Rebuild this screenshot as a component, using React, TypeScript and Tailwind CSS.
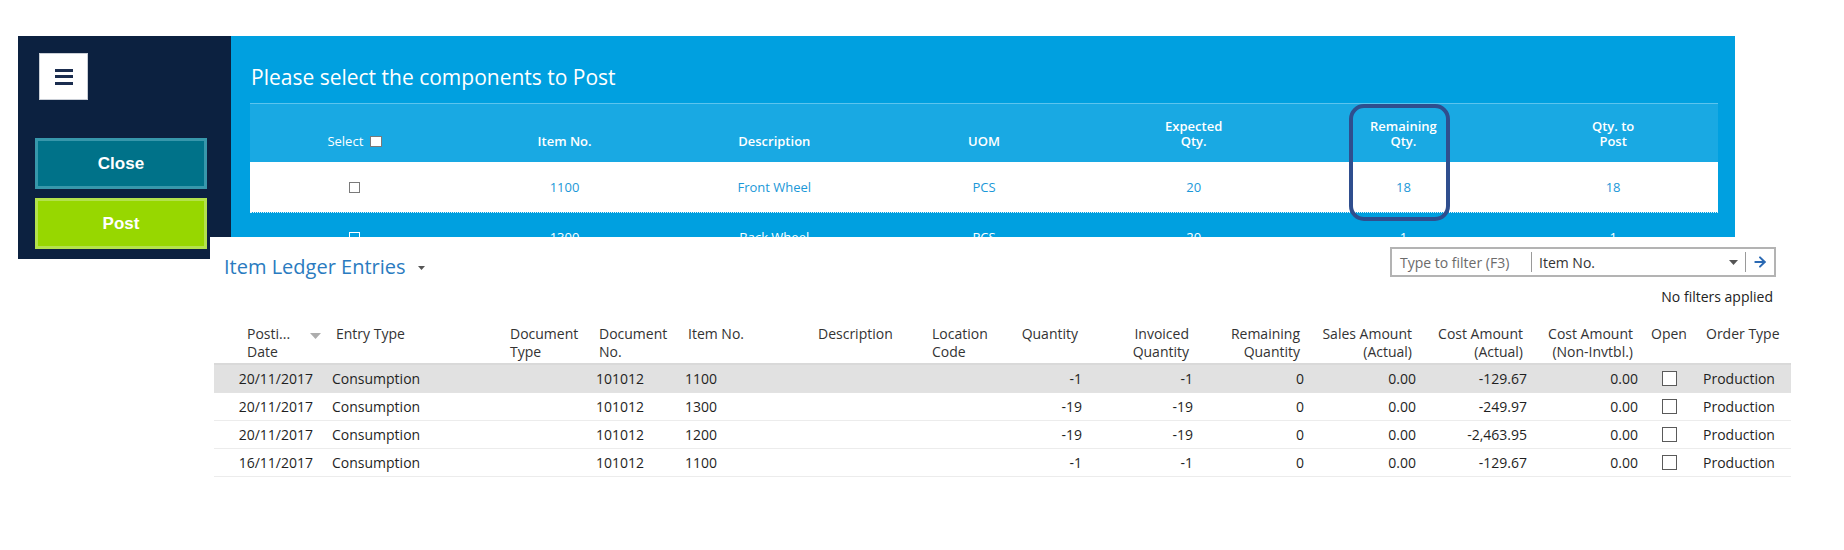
import { ArrowRight } from "lucide-react";

const topHeaders = [
  ["Item No."],
  ["Description"],
  ["UOM"],
  ["Expected", "Qty."],
  ["Remaining", "Qty."],
  ["Qty. to", "Post"],
];

const topRows = [
  ["1100", "Front Wheel", "PCS", "20", "18", "18"],
  ["1300", "Back Wheel", "PCS", "20", "1", "1"],
];

// lower table columns: header class, data class, header lines
const cols = [
  { h: "pl-[14px]", d: "pl-[10px]", label: ["Entry Type"] },
  { h: "pl-[5px]", d: "pl-[5px]", label: ["Document", "Type"] },
  { h: "pl-[9px]", d: "pl-[6px]", label: ["Document", "No."] },
  { h: "pl-[10px]", d: "pl-[7px]", label: ["Item No."] },
  { h: "pl-[8px]", d: "pl-[8px]", label: ["Description"] },
  { h: "pl-[7px]", d: "pl-[7px]", label: ["Location", "Code"] },
  { h: "pr-[12px] text-right", d: "pr-[8px] text-right", label: ["Quantity"] },
  { h: "pr-[11px] text-right", d: "pr-[7px] text-right", label: ["Invoiced", "Quantity"] },
  { h: "pr-[11px] text-right", d: "pr-[7px] text-right", label: ["Remaining", "Quantity"] },
  { h: "pr-[11px] text-right", d: "pr-[7px] text-right", label: ["Sales Amount", "(Actual)"] },
  { h: "pr-[11px] text-right", d: "pr-[7px] text-right", label: ["Cost Amount", "(Actual)"] },
  { h: "pr-[12px] text-right", d: "pr-[7px] text-right", label: ["Cost Amount", "(Non-Invtbl.)"] },
];

const entries = [
  ["20/11/2017", "Consumption", "", "101012", "1100", "", "", "-1", "-1", "0", "0.00", "-129.67", "0.00"],
  ["20/11/2017", "Consumption", "", "101012", "1300", "", "", "-19", "-19", "0", "0.00", "-249.97", "0.00"],
  ["20/11/2017", "Consumption", "", "101012", "1200", "", "", "-19", "-19", "0", "0.00", "-2,463.95", "0.00"],
  ["16/11/2017", "Consumption", "", "101012", "1100", "", "", "-1", "-1", "0", "0.00", "-129.67", "0.00"],
];

const gridCols =
  "grid grid-cols-[108px_183px_85px_88px_132px_115px_85px_80px_110px_111px_112px_111px_111px_51px_95px]";

function Sidebar() {
  return (
    <aside className="flex h-[223px] w-[213px] shrink-0 flex-col bg-[#0c2140]">
      <div className="ml-[21px] mt-[17px] flex h-[47px] w-[49px] flex-col items-center justify-center gap-[3.5px] border border-[#c9ced6] bg-white">
        <span className="h-[3px] w-[18px] bg-[#1b2d4f]" />
        <span className="h-[3px] w-[18px] bg-[#1b2d4f]" />
        <span className="h-[3px] w-[18px] bg-[#1b2d4f]" />
      </div>
      <div className="ml-[17px] mt-[38px] flex w-[172px] flex-col gap-[9px] font-['Liberation_Sans',Arial,sans-serif] text-[17px] font-bold text-white">
        <button className="h-[51px] border-[3px] border-[#3797ab] bg-[#007289]">Close</button>
        <button className="h-[51px] border-[3px] border-[#b3e24c] bg-[#97d700]">Post</button>
      </div>
    </aside>
  );
}

function SmallBox({ white }: { white?: boolean }) {
  return (
    <span
      className={
        white
          ? "inline-block h-[11px] w-[11px] border border-white"
          : "inline-block h-[11px] w-[11px] border-[1.5px] border-[#7a7a7a] bg-white"
      }
    />
  );
}

function PostDialog() {
  return (
    <section className="relative h-[223px] w-[1504px] shrink-0 overflow-hidden bg-[#00a0e0]">
      <h1 className="ml-[20px] mt-[27px] text-[21px] font-normal leading-[28px] text-white">
        Please select the components to Post
      </h1>
      <div className="ml-[19px] mt-[12px] w-[1468px]">
        <div className="grid h-[59px] grid-cols-7 items-end border-t border-[#5cc4ee] bg-[#19a9e3] pb-[13px] text-[13px] font-semibold leading-[15px] text-white">
          <div className="flex items-center justify-center gap-[7px] font-normal">
            <span>Select</span>
            <span className="inline-block h-[11px] w-[12px] border-[1.5px] border-[#7a7a7a] bg-white" />
          </div>
          {topHeaders.map((lines) => (
            <div key={lines.join()} className="text-center">
              {lines.map((l) => (
                <div key={l}>{l}</div>
              ))}
            </div>
          ))}
        </div>
        {topRows.map((row, i) => (
          <div
            key={row[0]}
            className={
              i === 0
                ? "grid h-[50px] grid-cols-7 items-center bg-white pt-[1px] text-[13px] text-[#1b98d8]"
                : "grid h-[50px] grid-cols-7 items-center border-t border-dotted border-[#e3f3fb] text-[13px] text-white"
            }
          >
            <div className="flex justify-center">
              <SmallBox white={i !== 0} />
            </div>
            {row.map((c, j) => (
              <div key={j} className="text-center">
                {c}
              </div>
            ))}
          </div>
        ))}
      </div>
      {/* highlight drawn over the Remaining Qty. column */}
      <div className="absolute left-[1118px] top-[68px] h-[117px] w-[101px] rounded-[15px] border-[4px] border-[#2f4e8e]" />
    </section>
  );
}

function LedgerEntries() {
  return (
    <section className="relative z-10 -mt-[22px] ml-[210px] w-[1600px] bg-white pb-[60px]">
      <div className="flex h-[44px] w-[1566px] items-start justify-between">
        <div className="ml-[14px] mt-[16px] flex items-center gap-[12px]">
          <span className="text-[20px] font-normal leading-[28px] text-[#2a7bc0]">Item Ledger Entries</span>
          <svg width="7" height="4" viewBox="0 0 7 4" className="mt-[2px]">
            <polygon points="0,0 7,0 3.5,4" fill="#555" />
          </svg>
        </div>
        <div className="mt-[10px] flex h-[30px] w-[386px] items-center border-2 border-[#b3b3b3] text-[14px]">
          <span className="w-[139px] pl-[8px] text-[#6b6b6b]">Type to filter (F3)</span>
          <span className="h-[20px] w-px bg-[#9a9a9a]" />
          <span className="flex-1 pl-[7px] text-[#333]">Item No.</span>
          <svg width="9" height="5" viewBox="0 0 9 5" className="mr-[7px]">
            <polygon points="0,0 9,0 4.5,5" fill="#555" />
          </svg>
          <span className="h-[20px] w-px bg-[#9a9a9a]" />
          <ArrowRight size={16} strokeWidth={3} className="ml-[6px] mr-[6px] text-[#2a69b3]" />
        </div>
      </div>
      <div className="mt-[6px] w-[1563px] text-right text-[14px] leading-[20px] text-[#222]">No filters applied</div>

      <div className="ml-[4px] mt-[16px] w-[1577px] text-[14px]">
        <div className={`${gridCols} border-b-2 border-[#d9d9d9] pb-[2px] pt-[2px] leading-[18px] text-[#333]`}>
          <div className="flex items-start pl-[33px]">
            <div>
              <div>Posti...</div>
              <div>Date</div>
            </div>
            <svg width="11" height="6" viewBox="0 0 11 6" className="ml-[20px] mt-[8px]">
              <polygon points="0,0 11,0 5.5,6" fill="#adadad" />
            </svg>
          </div>
          {cols.map((c) => (
            <div key={c.label.join()} className={c.h}>
              {c.label.map((l) => (
                <div key={l}>{l}</div>
              ))}
            </div>
          ))}
          <div className="pl-[6px]">Open</div>
          <div className="pl-[10px]">Order Type</div>
        </div>
        {entries.map((row, i) => (
          <div
            key={i}
            className={
              i === 0
                ? `${gridCols} h-[28px] items-center border-b border-[#e2e2e2] bg-[#e1e1e1] text-[#1f1f1f]`
                : `${gridCols} h-[28px] items-center border-b border-[#ececec] text-[#1f1f1f]`
            }
          >
            <div className="pr-[9px] text-right">{row[0]}</div>
            {cols.map((c, j) => (
              <div key={j} className={c.d}>
                {row[j + 1]}
              </div>
            ))}
            <div className="pl-[17px]">
              <span className="block h-[15px] w-[15px] border border-[#5a5a5a] bg-white" />
            </div>
            <div className="pl-[7px]">Production</div>
          </div>
        ))}
      </div>
    </section>
  );
}

export default function App() {
  return (
    <div className="h-[550px] w-[1844px] overflow-hidden bg-white font-['Open_Sans','Noto_Sans',sans-serif]">
      <div className="ml-[18px] flex pt-[36px]">
        <Sidebar />
        <PostDialog />
      </div>
      <LedgerEntries />
    </div>
  );
}
